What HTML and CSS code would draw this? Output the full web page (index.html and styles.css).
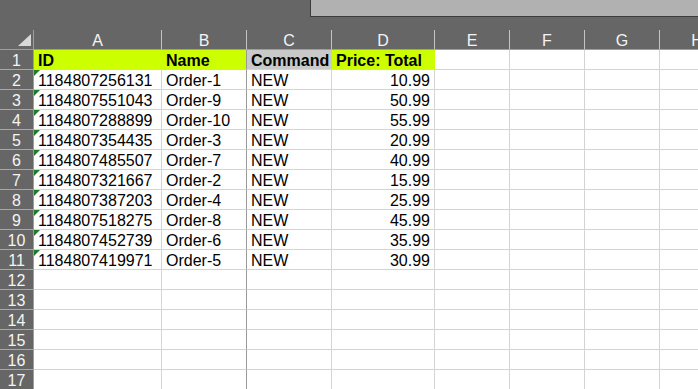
FILE: index.html
```html
<!DOCTYPE html>
<html lang="en">
<head>
<meta charset="utf-8">
<title>Sheet</title>
<link rel="stylesheet" href="styles.css">
</head>
<body>
<div class="app">
  <div class="topbar"><div class="formula-box"></div></div>
  <div class="sheet">
    <div class="row head">
      <div class="corner"><span class="tri"></span></div>
      <div class="ch">A</div><div class="ch">B</div><div class="ch">C</div><div class="ch">D</div>
      <div class="ch">E</div><div class="ch">F</div><div class="ch">G</div><div class="ch">H</div>
    </div>
    <div class="row r1">
      <div class="rh">1</div>
      <div class="c b lime">ID</div><div class="c b lime">Name</div><div class="c b grey frz">Command</div><div class="c b lime">Price: Total</div>
      <div class="c"></div><div class="c"></div><div class="c"></div><div class="c"></div>
    </div>
    <div class="row"><div class="rh">2</div><div class="c t">1184807256131</div><div class="c">Order-1</div><div class="c frz">NEW</div><div class="c n">10.99</div><div class="c"></div><div class="c"></div><div class="c"></div><div class="c"></div></div>
    <div class="row"><div class="rh">3</div><div class="c t">1184807551043</div><div class="c">Order-9</div><div class="c frz">NEW</div><div class="c n">50.99</div><div class="c"></div><div class="c"></div><div class="c"></div><div class="c"></div></div>
    <div class="row"><div class="rh">4</div><div class="c t">1184807288899</div><div class="c">Order-10</div><div class="c frz">NEW</div><div class="c n">55.99</div><div class="c"></div><div class="c"></div><div class="c"></div><div class="c"></div></div>
    <div class="row"><div class="rh">5</div><div class="c t">1184807354435</div><div class="c">Order-3</div><div class="c frz">NEW</div><div class="c n">20.99</div><div class="c"></div><div class="c"></div><div class="c"></div><div class="c"></div></div>
    <div class="row"><div class="rh">6</div><div class="c t">1184807485507</div><div class="c">Order-7</div><div class="c frz">NEW</div><div class="c n">40.99</div><div class="c"></div><div class="c"></div><div class="c"></div><div class="c"></div></div>
    <div class="row"><div class="rh">7</div><div class="c t">1184807321667</div><div class="c">Order-2</div><div class="c frz">NEW</div><div class="c n">15.99</div><div class="c"></div><div class="c"></div><div class="c"></div><div class="c"></div></div>
    <div class="row"><div class="rh">8</div><div class="c t">1184807387203</div><div class="c">Order-4</div><div class="c frz">NEW</div><div class="c n">25.99</div><div class="c"></div><div class="c"></div><div class="c"></div><div class="c"></div></div>
    <div class="row"><div class="rh">9</div><div class="c t">1184807518275</div><div class="c">Order-8</div><div class="c frz">NEW</div><div class="c n">45.99</div><div class="c"></div><div class="c"></div><div class="c"></div><div class="c"></div></div>
    <div class="row"><div class="rh">10</div><div class="c t">1184807452739</div><div class="c">Order-6</div><div class="c frz">NEW</div><div class="c n">35.99</div><div class="c"></div><div class="c"></div><div class="c"></div><div class="c"></div></div>
    <div class="row"><div class="rh">11</div><div class="c t">1184807419971</div><div class="c">Order-5</div><div class="c frz">NEW</div><div class="c n">30.99</div><div class="c"></div><div class="c"></div><div class="c"></div><div class="c"></div></div>
    <div class="row"><div class="rh">12</div><div class="c"></div><div class="c"></div><div class="c frz"></div><div class="c"></div><div class="c"></div><div class="c"></div><div class="c"></div><div class="c"></div></div>
    <div class="row"><div class="rh">13</div><div class="c"></div><div class="c"></div><div class="c frz"></div><div class="c"></div><div class="c"></div><div class="c"></div><div class="c"></div><div class="c"></div></div>
    <div class="row"><div class="rh">14</div><div class="c"></div><div class="c"></div><div class="c frz"></div><div class="c"></div><div class="c"></div><div class="c"></div><div class="c"></div><div class="c"></div></div>
    <div class="row"><div class="rh">15</div><div class="c"></div><div class="c"></div><div class="c frz"></div><div class="c"></div><div class="c"></div><div class="c"></div><div class="c"></div><div class="c"></div></div>
    <div class="row"><div class="rh">16</div><div class="c"></div><div class="c"></div><div class="c frz"></div><div class="c"></div><div class="c"></div><div class="c"></div><div class="c"></div><div class="c"></div></div>
    <div class="row"><div class="rh">17</div><div class="c"></div><div class="c"></div><div class="c frz"></div><div class="c"></div><div class="c"></div><div class="c"></div><div class="c"></div><div class="c"></div></div>
  </div>
</div>
</body>
</html>
```
FILE: styles.css
```css
* { box-sizing: border-box; }
html, body { margin: 0; padding: 0; }
body {
  width: 698px;
  height: 389px;
  overflow: hidden;
  background: #ffffff;
  font-family: "Liberation Sans", Arial, sans-serif;
  font-size: 16px;
}
.app { width: 698px; overflow: hidden; }
.topbar {
  height: 30px;
  background: #666666;
  display: flex;
  justify-content: flex-end;
  align-items: flex-start;
}
.formula-box {
  width: 388px;
  height: 17px;
  background: #b1b1b1;
  border-left: 1px solid #3c3c3c;
  border-bottom: 1px solid #3c3c3c;
}
.sheet { width: 735px; }
.row {
  display: grid;
  grid-template-columns: 34px 128px 85px 85px 103px 75px 75px 75px 75px;
  height: 20px;
}
.row > div {
  height: 20px;
  line-height: 19px;
  white-space: nowrap;
  overflow: hidden;
}
.head > div {
  background: #666666;
  color: #f4f4f4;
  text-align: center;
  border-right: 1px solid #c4c4c4;
  border-bottom: 1px solid #9e9e9e;
  padding-top: 1px;
}
.corner {
  position: relative;
}
.head > .corner { border-right-color: #9e9e9e; }
.tri {
  position: absolute;
  right: 2px;
  bottom: 3px;
  width: 0;
  height: 0;
  border-left: 13px solid transparent;
  border-bottom: 12px solid #d9d9d9;
}
.rh {
  background: #666666;
  color: #f4f4f4;
  text-align: center;
  border-right: 1px solid #9e9e9e;
  border-bottom: 1px solid #a8a8a8;
  padding-top: 1px;
}
.c {
  position: relative;
  color: #000000;
  border-right: 1px solid #d4d4d4;
  border-bottom: 1px solid #d4d4d4;
  padding: 1px 3px 0 4px;
}
.c.n { text-align: right; padding-right: 4px; }
.c.b { font-weight: bold; }
.lime { background: #ccff00; border-right-color: #ccff00; }
.grey { background: #c9c9c9; border-right-color: #c9c9c9; }
.row > .c:nth-child(3) { border-right-color: #9a9a9a; }
.c.t::before {
  content: "";
  position: absolute;
  left: 0;
  top: 0;
  width: 0;
  height: 0;
  border-top: 6px solid #1f7a2a;
  border-right: 6px solid transparent;
}
```
